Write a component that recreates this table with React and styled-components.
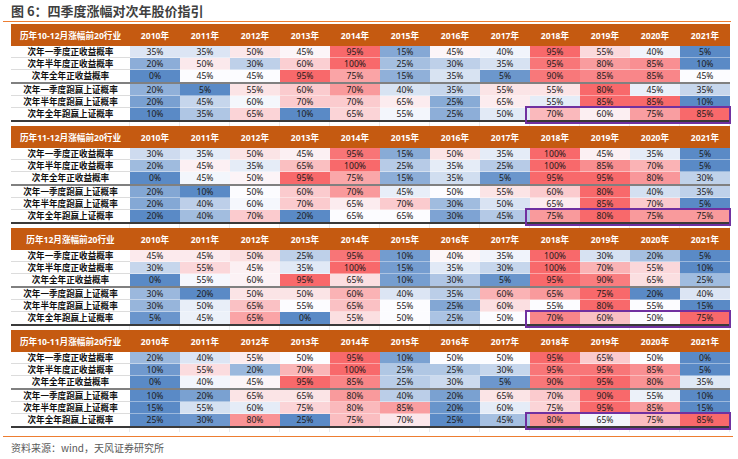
import styled, { createGlobalStyle } from 'styled-components'

const YEARS = [2010, 2011, 2012, 2013, 2014, 2015, 2016, 2017, 2018, 2019, 2020, 2021]

const LABELS = [
  '次年一季度正收益概率',
  '次年半年度正收益概率',
  '次年全年正收益概率',
  '次年一季度跑赢上证概率',
  '次年半年度跑赢上证概率',
  '次年全年跑赢上证概率',
]

const TABLES = [
  {
    title: '历年10-12月涨幅前20行业',
    rows: [
      [35, 35, 50, 45, 95, 15, 45, 40, 95, 55, 40, 5],
      [20, 50, 30, 60, 100, 25, 30, 35, 95, 80, 85, 10],
      [0, 45, 45, 95, 75, 15, 35, 5, 90, 85, 85, 45],
      [20, 5, 55, 60, 70, 40, 35, 55, 55, 80, 45, 35],
      [20, 45, 60, 70, 70, 65, 25, 65, 55, 85, 85, 10],
      [10, 35, 65, 10, 65, 55, 25, 50, 70, 60, 75, 85],
    ],
  },
  {
    title: '历年11-12月涨幅前20行业',
    rows: [
      [30, 35, 50, 45, 95, 15, 50, 35, 100, 45, 35, 5],
      [20, 45, 35, 65, 100, 25, 35, 25, 100, 85, 70, 5],
      [0, 45, 50, 95, 75, 15, 35, 5, 95, 95, 80, 30],
      [20, 10, 50, 60, 70, 45, 50, 55, 60, 80, 40, 35],
      [20, 40, 60, 70, 65, 70, 30, 50, 65, 85, 70, 5],
      [20, 40, 70, 20, 65, 65, 30, 45, 75, 80, 75, 75],
    ],
  },
  {
    title: '历年12月涨幅前20行业',
    rows: [
      [45, 45, 50, 25, 95, 10, 40, 35, 100, 30, 20, 5],
      [30, 55, 45, 35, 100, 15, 35, 30, 100, 70, 55, 10],
      [0, 55, 60, 95, 65, 10, 30, 5, 95, 90, 65, 25],
      [30, 20, 50, 50, 60, 40, 35, 60, 65, 75, 20, 40],
      [30, 50, 65, 55, 65, 55, 25, 60, 55, 80, 55, 15],
      [5, 45, 65, 0, 55, 50, 25, 50, 70, 60, 50, 75],
    ],
  },
  {
    title: '历年10-11月涨幅前20行业',
    rows: [
      [20, 40, 55, 50, 95, 10, 50, 50, 95, 65, 50, 0],
      [10, 55, 20, 70, 100, 25, 25, 30, 95, 95, 85, 5],
      [0, 40, 45, 95, 85, 25, 30, 5, 90, 95, 80, 35],
      [10, 20, 65, 65, 80, 40, 20, 65, 70, 90, 55, 10],
      [15, 55, 60, 75, 80, 85, 20, 60, 75, 95, 85, 15],
      [25, 30, 80, 25, 75, 70, 25, 45, 80, 65, 75, 85],
    ],
  },
]

// excel style red / white / blue scale, per row, midpoint = 50th percentile
const BLUE = [90, 138, 198]
const WHITE = [252, 252, 255]
const RED = [248, 105, 107]

const mix = (a, b, t) =>
  `rgb(${a.map((c, i) => Math.round(c + (b[i] - c) * t)).join(',')})`

const scaleColor = (v, row) => {
  const sorted = [...row].sort((a, b) => a - b)
  const n = sorted.length
  const mid = (sorted[n / 2 - 1] + sorted[n / 2]) / 2
  const min = sorted[0]
  const max = sorted[n - 1]
  if (v <= mid) return mix(WHITE, BLUE, mid === min ? 0 : (mid - v) / (mid - min))
  return mix(WHITE, RED, max === mid ? 0 : (v - mid) / (max - mid))
}

const GlobalStyle = createGlobalStyle`
  body {
    margin: 0;
    background: #fff;
    font-family: "Noto Sans", "Noto Sans CJK SC", sans-serif;
  }
`

const Page = styled.div`
  width: 738px;
  height: 459px;
  overflow: hidden;
`

const TitleBar = styled.div`
  margin: 0 7px 0 3px;
  height: 21px;
  padding-left: 8px;
  border-bottom: 1px solid #ed7d31;
  font-family: "Noto Sans CJK SC", sans-serif;
  font-size: 13px;
  font-weight: 700;
  line-height: 21px;
  color: #3f3f3f;
`

const Tables = styled.div`
  margin: 2px 0 0 11px;
  width: 719px;
`

const Block = styled.div`
  position: relative;
`

const Row = styled.div`
  display: grid;
  grid-template-columns: 119px repeat(12, 50px);
  border-top: ${(p) => (p.$divider ? '2px solid #808080' : 'none')};
  border-bottom: ${(p) => (p.$last ? '2px solid #3a3a3a' : 'none')};
`

const HeadCell = styled.div`
  height: 22px;
  background: #c55a11;
  color: #fff;
  font-size: 8.6px;
  font-weight: 700;
  display: flex;
  align-items: center;
  justify-content: center;
  white-space: nowrap;
`

const LabelCell = styled.div`
  height: 12px;
  box-sizing: border-box;
  font-size: 8.6px;
  font-weight: 700;
  line-height: 12px;
  text-align: center;
  color: #111;
  white-space: nowrap;
  box-shadow: ${(p) => (p.$rule ? 'inset 0 -1px 0 #dcdcdc' : 'none')};
`

const ValueCell = styled.div`
  height: 12px;
  font-size: 8.6px;
  line-height: 12px;
  text-align: center;
  color: #1a1a1a;
  background: ${(p) => p.$bg};
  box-shadow: ${(p) => (p.$rule ? 'inset 0 -1px 0 rgba(255,255,255,0.4)' : 'none')};
`

const Spacer = styled.div`
  display: grid;
  grid-template-columns: 119px repeat(12, 50px);
  height: 4px;

  span {
    border-right: 1px solid #ececec;
  }
`

const Highlight = styled.div`
  position: absolute;
  left: 514px;
  top: 82px;
  width: 206px;
  height: 18px;
  box-sizing: border-box;
  border: 2px solid #7030a0;
  pointer-events: none;
`

const Footer = styled.div`
  margin: 4px 5px 0 3px;
  padding-left: 8px;
  border-top: 1px solid #ed7d31;
  font-family: "Noto Sans CJK SC", sans-serif;
  font-size: 10px;
  line-height: 22px;
  color: #595959;
`

function HeatTable({ title, rows }) {
  return (
    <Block>
      <Row>
        <HeadCell>{title}</HeadCell>
        {YEARS.map((y) => (
          <HeadCell key={y}>{y}年</HeadCell>
        ))}
      </Row>
      {rows.map((row, i) => {
        const rule = i !== 2 && i !== 5
        return (
          <Row key={i} $divider={i === 3} $last={i === 5}>
            <LabelCell $rule={rule}>{LABELS[i]}</LabelCell>
            {row.map((v, j) => (
              <ValueCell key={j} $bg={scaleColor(v, row)} $rule={rule}>
                {v}%
              </ValueCell>
            ))}
          </Row>
        )
      })}
      <Spacer>
        {Array.from({ length: 13 }, (_, k) => (
          <span key={k} />
        ))}
      </Spacer>
      <Highlight />
    </Block>
  )
}

function App() {
  return (
    <Page>
      <GlobalStyle />
      <TitleBar>图 6：四季度涨幅对次年股价指引</TitleBar>
      <Tables>
        {TABLES.map((t) => (
          <HeatTable key={t.title} title={t.title} rows={t.rows} />
        ))}
      </Tables>
      <Footer>资料来源：wind，天风证券研究所</Footer>
    </Page>
  )
}

export default App
